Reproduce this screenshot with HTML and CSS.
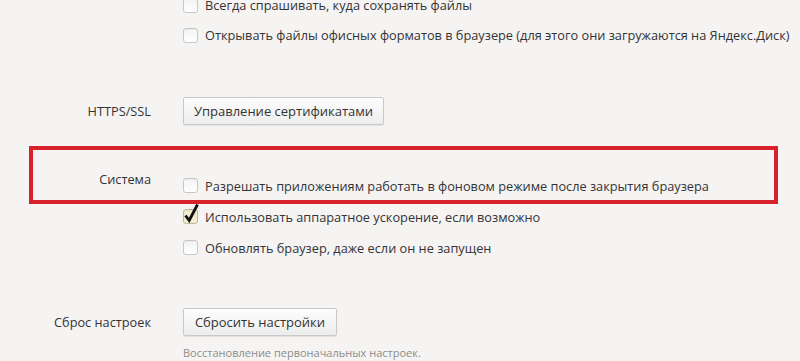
FILE: index.html
```html
<!DOCTYPE html>
<html lang="ru">
<head>
<meta charset="utf-8">
<title>Настройки</title>
<link rel="stylesheet" href="styles.css">
</head>
<body>
<div class="page">
  <section class="section section-downloads">
    <div class="label"></div>
    <div class="controls">
      <label class="check-row"><span class="checkbox"></span><span class="check-text">Всегда спрашивать, куда сохранять файлы</span></label>
      <label class="check-row"><span class="checkbox"></span><span class="check-text">Открывать файлы офисных форматов в браузере (для этого они загружаются на Яндекс.Диск)</span></label>
    </div>
  </section>

  <section class="section section-https">
    <div class="label label-button">HTTPS/SSL</div>
    <div class="controls">
      <button class="btn btn-certs" type="button">Управление сертификатами</button>
    </div>
  </section>

  <section class="section section-system">
    <div class="label label-top">Система</div>
    <div class="controls">
      <label class="check-row"><span class="checkbox"></span><span class="check-text">Разрешать приложениям работать в фоновом режиме после закрытия браузера</span></label>
      <label class="check-row"><span class="checkbox checked"><svg class="tick" viewBox="0 0 16 20" width="16" height="20"><path d="M2.5 12.5 L6.2 17.5 L14.5 1.5" fill="none" stroke="#111" stroke-width="2.8" stroke-linejoin="miter" stroke-linecap="butt"/></svg></span><span class="check-text">Использовать аппаратное ускорение, если возможно</span></label>
      <label class="check-row"><span class="checkbox"></span><span class="check-text">Обновлять браузер, даже если он не запущен</span></label>
    </div>
    <div class="highlight"></div>
  </section>

  <section class="section section-reset">
    <div class="label label-button">Сброс настроек</div>
    <div class="controls">
      <button class="btn btn-reset" type="button">Сбросить настройки</button>
      <div class="hint">Восстановление первоначальных настроек.</div>
    </div>
  </section>
</div>
</body>
</html>
```

FILE: styles.css
```css
html, body {
  margin: 0;
  padding: 0;
  background: #f5f4f3;
  height: 100%;
  overflow: hidden;
}

body {
  font-family: "Open Sans", "Noto Sans", sans-serif;
  font-size: 12.75px;
  color: #333333;
}

.page {
  position: relative;
  margin-top: -10px;
  display: flex;
  flex-direction: column;
}

.section {
  display: grid;
  grid-template-columns: 151px 1fr;
  column-gap: 32px;
  align-items: start;
}

.section-https { margin-top: 47px; }
.section-system { margin-top: 45px; position: relative; }
.section-reset { margin-top: 45px; }

.label {
  text-align: right;
  white-space: nowrap;
  line-height: 18px;
}

.label-button {
  padding-top: 5px;
}

.label-top {
  padding-top: 0;
}

.controls {
  display: flex;
  flex-direction: column;
  align-items: flex-start;
}

.check-row {
  display: flex;
  align-items: center;
  gap: 7px;
  height: 31px;
  white-space: nowrap;
}

.section-downloads .check-row { height: 30px; }

.checkbox {
  position: relative;
  width: 13px;
  height: 13px;
  border: 1px solid #c8c8c8;
  border-radius: 3px;
  background: linear-gradient(#f4f4f4, #ffffff);
  box-shadow: inset 0 1px 1px rgba(0,0,0,0.05);
  flex: none;
}

.checkbox.checked {
  background: #f2ecd0;
  border-color: #bdb89c;
}

.tick {
  position: absolute;
  left: -1px;
  top: -7px;
}

.btn {
  font-family: inherit;
  font-size: 13px;
  color: #333333;
  height: 28px;
  padding: 0;
  white-space: nowrap;
  text-align: center;
  border: 1px solid #c9c9c9;
  border-radius: 2px;
  background: linear-gradient(#fdfdfd, #ededed);
  box-shadow: 0 1px 1px rgba(0,0,0,0.08);
  cursor: pointer;
}

.btn-certs { width: 201px; }
.btn-reset { width: 154px; }

.hint {
  margin-top: 9px;
  font-size: 11px;
  line-height: 16px;
  color: #8c8c8c;
  white-space: nowrap;
}

.highlight {
  position: absolute;
  left: 29px;
  top: -24px;
  width: 741px;
  height: 50px;
  border: 4px solid #d7222b;
  pointer-events: none;
}
```
